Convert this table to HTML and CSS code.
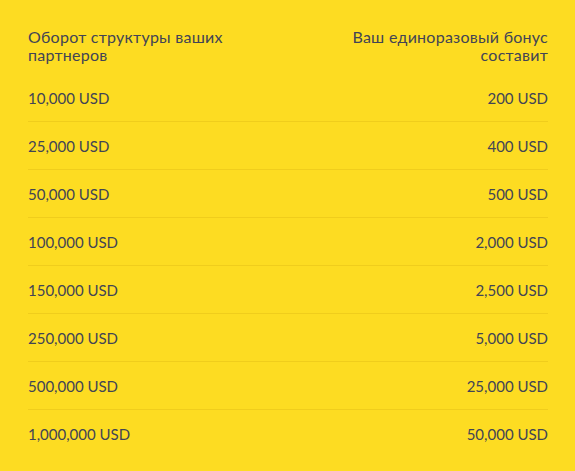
FILE: index.html
```html
<!DOCTYPE html>
<html lang="ru">
<head>
<meta charset="utf-8">
<link rel="stylesheet" href="styles.css">
</head>
<body>
<div class="table">
  <div class="head">
    <div class="hcell left">Оборот структуры ваших<br>партнеров</div>
    <div class="hcell right">Ваш единоразовый бонус<br>составит</div>
  </div>
  <div class="row"><span>10,000 USD</span><span>200 USD</span></div>
  <div class="row"><span>25,000 USD</span><span>400 USD</span></div>
  <div class="row"><span>50,000 USD</span><span>500 USD</span></div>
  <div class="row"><span>100,000 USD</span><span>2,000 USD</span></div>
  <div class="row"><span>150,000 USD</span><span>2,500 USD</span></div>
  <div class="row"><span>250,000 USD</span><span>5,000 USD</span></div>
  <div class="row"><span>500,000 USD</span><span>25,000 USD</span></div>
  <div class="row last"><span>1,000,000 USD</span><span>50,000 USD</span></div>
</div>
</body>
</html>
```
FILE: styles.css
```css
html, body {
  margin: 0;
  padding: 0;
  background: #fddc22;
}
body {
  font-family: Lato, "Noto Sans", sans-serif;
  font-weight: 400;
  color: #424455;
  width: 575px;
  height: 471px;
  overflow: hidden;
}
.table {
  padding: 28px 27px 0 28px;
}
.head {
  display: flex;
  justify-content: space-between;
  font-size: 16px;
  line-height: 18px;
  letter-spacing: 0.25px;
  padding-bottom: 10px;
}
.hcell.right {
  text-align: right;
}
.row {
  display: flex;
  justify-content: space-between;
  align-items: center;
  height: 47px;
  border-bottom: 1px solid #f0cd1c;
  font-size: 15px;
}
.row.last {
  border-bottom: none;
}
```
